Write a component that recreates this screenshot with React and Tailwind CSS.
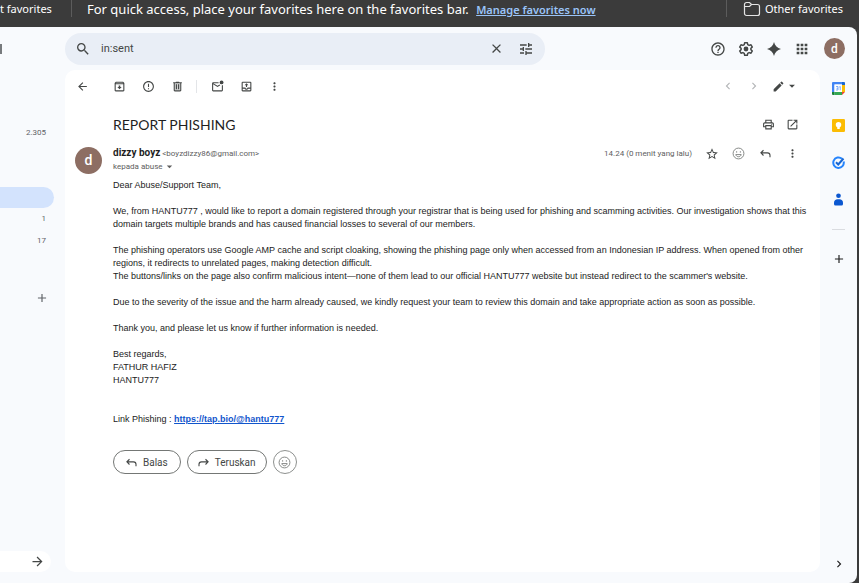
import React from 'react';
import {
  MdAdd,
  MdApps,
  MdArrowBack,
  MdArrowDropDown,
  MdArrowForward,
  MdChevronLeft,
  MdChevronRight,
  MdClose,
  MdEdit,
  MdErrorOutline,
  MdHelpOutline,
  MdMoreVert,
  MdOpenInNew,
  MdOutlineArchive,
  MdOutlinePrint,
  MdSearch,
  MdStarBorder,
  MdTune,
} from 'react-icons/md';

const IconButton = ({ label, className = 'w-[29px] h-6', children }) => (
  <button
    type="button"
    aria-label={label}
    className={`flex shrink-0 items-center justify-center ${className}`}
  >
    {children}
  </button>
);

const TrashIcon = () => (
  <svg width="13" height="13" viewBox="0 0 24 24" fill="currentColor">
    <path d="M15 4V3H9v1H4v2h1v13c0 1.1.9 2 2 2h10c1.1 0 2-.9 2-2V6h1V4h-5zm2 15H7V6h10v13z" />
    <path d="M9 8h2v9H9zM13 8h2v9h-2z" />
    <path d="M7 6h10v13H7z" opacity="0.25" />
  </svg>
);

const UnreadIcon = () => (
  <svg width="13" height="13" viewBox="0 0 24 24" fill="currentColor">
    <path d="M20 10v9H4V8l8 5 5.300-3.300A5 5 0 0 1 15.700 8.300L12 10.700 4 6h10.100A5 5 0 0 1 14.100 4H4a2 2 0 0 0-2 2v13c0 1.100.9 2 2 2h16a2 2 0 0 0 2-2V9a5 5 0 0 1-2 1z" />
    <circle cx="19.500" cy="4.500" r="3.500" />
  </svg>
);

const MoveIcon = () => (
  <svg width="13" height="13" viewBox="0 0 24 24" fill="currentColor">
    <path d="M19 3H5a2 2 0 0 0-2 2v14c0 1.100.9 2 2 2h14a2 2 0 0 0 2-2V5a2 2 0 0 0-2-2zm0 16H5v-3h3.600c.7 1.200 2 2 3.400 2s2.700-.8 3.500-2H19v3zm0-5h-5a2 2 0 0 1-4 0H5V5h14v9z" />
    <path d="M11 13h2V9.500h2.500L12 6 8.500 9.500H11z" />
  </svg>
);

const SmileIcon = () => (
  <svg width="13" height="13" viewBox="0 0 24 24" fill="none" stroke="currentColor" strokeWidth="1.6">
    <circle cx="12" cy="12" r="10" />
    <path d="M7 14h10c-.6 2.400-2.600 4-5 4s-4.400-1.600-5-4z" />
    <circle cx="8.500" cy="9" r="1.200" fill="currentColor" stroke="none" />
    <circle cx="15.500" cy="9" r="1.200" fill="currentColor" stroke="none" />
  </svg>
);

const ReplyIcon = ({ className = '' }) => (
  <svg width="11" height="11" viewBox="0 0 22 22" fill="none" stroke="currentColor" strokeWidth="2.200" className={className}>
    <path d="M7 4.500 1.800 9.700 7 15M2.200 9.700H15a5 5 0 0 1 5 5v4" />
  </svg>
);

const SparkIcon = () => (
  <svg width="16" height="16" viewBox="0 0 24 24" fill="currentColor">
    <path d="M12 1.500c1.300 5.600 4.900 9.200 10.500 10.500-5.600 1.300-9.200 4.900-10.500 10.500C10.700 16.900 7.100 13.300 1.500 12 7.100 10.700 10.700 7.100 12 1.500z" />
  </svg>
);

const SettingsIcon = () => (
  <svg width="16" height="16" viewBox="0 0 24 24" fill="none" stroke="currentColor" strokeWidth="2.200" strokeLinejoin="round">
    <path d="M10 2.500h4l.6 2.900 2.100 1.200 2.800-.9 2 3.400-2.200 2v1.800l2.200 2-2 3.400-2.800-.9-2.100 1.200-.6 2.900h-4l-.6-2.900-2.100-1.200-2.800.9-2-3.400 2.200-2v-1.800l-2.200-2 2-3.400 2.800.9 2.100-1.200z" />
    <circle cx="12" cy="12" r="3.600" fill="currentColor" stroke="none" />
  </svg>
);

const FolderIcon = () => (
  <svg width="18" height="16" viewBox="0 0 18 16" fill="none" stroke="#e4e4e4" strokeWidth="1.200">
    <path d="M1.500 3.500a2 2 0 0 1 2-2h3l2 2h6a2 2 0 0 1 2 2v7a2 2 0 0 1-2 2h-11a2 2 0 0 1-2-2z" />
    <path d="M1.500 5.500h5l2-2" />
  </svg>
);

const CalendarIcon = () => (
  <svg width="13" height="13" viewBox="0 0 26 26">
    <path d="M2 0h18v5H5v15H0V2a2 2 0 0 1 2-2z" fill="#4285f4" />
    <path d="M20 0h4a2 2 0 0 1 2 2v4h-6z" fill="#1967d2" />
    <path d="M20 6h6v14h-6z" fill="#fbbc04" />
    <path d="M5 20h15v6H5z" fill="#34a853" />
    <path d="M0 20h5v6H2a2 2 0 0 1-2-2z" fill="#188038" />
    <path d="M20 20h6l-6 6z" fill="#ea4335" />
    <path d="M5 5h15v15H5z" fill="#fff" />
    <path d="M8 9h4v7H8M9 12.500h3M14.500 10l2-1v7.500" fill="none" stroke="#4285f4" strokeWidth="1.300" />
  </svg>
);

const KeepIcon = () => (
  <svg width="13" height="13" viewBox="0 0 26 26">
    <rect width="26" height="26" rx="2.500" fill="#fbbc04" />
    <circle cx="13" cy="11.500" r="5.500" fill="#fff" />
    <path d="M10.500 15h5v5h-5z" fill="#fff" />
  </svg>
);

const TasksIcon = () => (
  <svg width="13" height="13" viewBox="0 0 26 26" fill="none">
    <path d="M20 5.500A10.500 10.500 0 1 0 23.300 11" stroke="#2684fc" strokeWidth="4" />
    <path d="m8 12.500 4.500 4.500L23 5" stroke="#1967d2" strokeWidth="4" />
  </svg>
);

const ContactsIcon = () => (
  <svg width="13" height="13" viewBox="0 0 26 26">
    <circle cx="13" cy="5.500" r="4.700" fill="#0b57d0" />
    <path d="M4 19c0-4 3-6.500 7-6.500h4c4 0 7 2.500 7 6.500v3a3 3 0 0 1-3 3H7a3 3 0 0 1-3-3z" fill="#0b57d0" />
  </svg>
);

const FavoritesBar = () => (
  <div className="flex h-[27px] shrink-0 items-start bg-[#3b3b3b] font-['Noto_Sans','Open_Sans',sans-serif] leading-[18px] text-white">
    <span className="w-[71px] shrink-0 whitespace-nowrap text-[11px]">t favorites</span>
    <span className="h-[17px] w-px shrink-0 bg-[#5c5c5c]" />
    <p className="ml-[15px] whitespace-nowrap text-[13px]">
      For quick access, place your favorites here on the favorites bar.{' '}
      <a href="#favorites" className="ml-1 text-[11px] font-semibold text-[#9ac4f8] underline">
        Manage favorites now
      </a>
    </p>
    <span className="ml-auto h-[17px] w-px shrink-0 bg-[#5c5c5c]" />
    <button type="button" className="mr-4 ml-4 flex items-center gap-1 whitespace-nowrap text-[11px]">
      <FolderIcon />
      Other favorites
    </button>
  </div>
);

const Header = () => (
  <header className="flex h-[43px] shrink-0 items-center pr-3 text-[#444746]">
    <div className="flex w-[65px] shrink-0">
      <span className="h-[10px] w-[2px] bg-[#777a7d]" />
    </div>
    <form className="flex h-8 w-[480px] items-center rounded-full bg-[#e9eef6] pr-[5px] pl-[3px]">
      <IconButton label="Search">
        <MdSearch size={16} />
      </IconButton>
      <input
        type="text"
        aria-label="Search mail"
        defaultValue="in:sent"
        className="ml-1 h-6 min-w-0 flex-1 bg-transparent text-[11px] text-[#444746] outline-none"
      />
      <IconButton label="Clear search">
        <MdClose size={15} />
      </IconButton>
      <IconButton label="Search options">
        <MdTune size={16} />
      </IconButton>
    </form>
    <div className="ml-auto flex items-center">
      <IconButton label="Help" className="h-6 w-7"><MdHelpOutline size={16} /></IconButton>
      <IconButton label="Settings" className="h-6 w-7"><SettingsIcon /></IconButton>
      <IconButton label="Gemini" className="h-6 w-7"><SparkIcon /></IconButton>
      <IconButton label="Apps" className="h-6 w-7"><MdApps size={16} /></IconButton>
      <button
        type="button"
        className="ml-2 size-[21px] rounded-full bg-[#8d6e63] text-center text-[12px] leading-[20px] font-medium text-white"
      >
        d
      </button>
    </div>
  </header>
);

const Sidebar = () => (
  <nav className="flex w-[65px] shrink-0 flex-col text-right text-[8px] leading-[22px] text-[#5f6368]">
    <span className="mt-[52px] pr-[19px]">2.305</span>
    <span className="mt-[43px] mr-[11px] h-[21px] rounded-r-full bg-[#d3e3fd]" />
    <span className="pr-[19px]">1</span>
    <span className="pr-[19px]">17</span>
    <div className="mt-[34px] flex justify-end pr-[9px]">
      <IconButton label="Create label"><MdAdd size={14} /></IconButton>
    </div>
    <button
      type="button"
      aria-label="Expand"
      className="mt-auto mr-[14px] flex h-[21px] items-center justify-end rounded-r-full bg-white pr-[6px] text-[#444746]"
    >
      <MdArrowForward size={15} />
    </button>
  </nav>
);

const Toolbar = () => (
  <div className="flex h-8 items-center pr-[21px] pl-[3px] text-[#444746]">
    <IconButton label="Back"><MdArrowBack size={13} /></IconButton>
    <div className="ml-2 flex">
      <IconButton label="Archive"><MdOutlineArchive size={13} /></IconButton>
      <IconButton label="Report spam"><MdErrorOutline size={13} /></IconButton>
      <IconButton label="Delete"><TrashIcon /></IconButton>
    </div>
    <span className="mr-[6px] ml-1 h-[13px] w-px bg-[#e3e5e8]" />
    <IconButton label="Mark as unread"><UnreadIcon /></IconButton>
    <IconButton label="Move to"><MoveIcon /></IconButton>
    <IconButton label="More" className="h-6 w-[26px]"><MdMoreVert size={13} /></IconButton>
    <div className="ml-auto flex text-[#b4b6b8]">
      <IconButton label="Newer" className="h-6 w-[26px]"><MdChevronLeft size={14} /></IconButton>
      <IconButton label="Older" className="h-6 w-[26px]"><MdChevronRight size={14} /></IconButton>
    </div>
    <IconButton label="Input tools" className="ml-[5px] h-6">
      <MdEdit size={13} />
      <MdArrowDropDown size={14} />
    </IconButton>
  </div>
);

const MessageBody = () => (
  <div className="space-y-[13px] pr-2 pl-12 font-['Liberation_Sans',Arial,sans-serif] text-[9px] leading-[13px] text-[#222]">
    <p>Dear Abuse/Support Team,</p>
    <p>
      We, from HANTU777 , would like to report a domain registered through your registrar that is being used for
      phishing and scamming activities. Our investigation shows that this domain targets multiple brands and has caused
      financial losses to several of our members.
    </p>
    <p>
      The phishing operators use Google AMP cache and script cloaking, showing the phishing page only when accessed from
      an Indonesian IP address. When opened from other regions, it redirects to unrelated pages, making detection
      difficult.
      <br />
      The buttons/links on the page also confirm malicious intent—none of them lead to our official HANTU777 website but
      instead redirect to the scammer's website.
    </p>
    <p>
      Due to the severity of the issue and the harm already caused, we kindly request your team to review this domain
      and take appropriate action as soon as possible.
    </p>
    <p>Thank you, and please let us know if further information is needed.</p>
    <p>
      Best regards,
      <br />
      FATHUR HAFIZ
      <br />
      HANTU777
    </p>
    <p className="pt-[13px]">
      Link Phishing :{' '}
      <a href="https://tap.bio/@hantu777" className="font-bold text-[#1155cc] underline">
        https://tap.bio/@hantu777
      </a>
    </p>
  </div>
);

const Message = () => (
  <main className="min-w-0 flex-1 rounded-[10px] bg-white">
    <Toolbar />
    <div className="mt-2 flex h-7 items-center pr-4 pl-12 text-[#444746]">
      <h1 className="flex-1 font-[Lato,sans-serif] text-[14px] text-[#1f1f1f]">REPORT PHISHING</h1>
      <IconButton label="Print" className="h-6 w-6"><MdOutlinePrint size={13} /></IconButton>
      <IconButton label="Open in new window" className="h-6 w-6"><MdOpenInNew size={13} /></IconButton>
    </div>
    <div className="mt-2 flex h-[33px] items-start pr-[14px] pl-[10px]">
      <span className="mt-px mr-[11px] size-[27px] shrink-0 rounded-full bg-[#8d6e63] text-center text-[14px] leading-[26px] font-medium text-white">
        d
      </span>
      <div className="min-w-0 flex-1 text-[8px] leading-[13px] text-[#5e5e5e]">
        <div>
          <span className="text-[10px] font-bold text-[#1f1f1f]">dizzy boyz</span>{' '}
          &lt;boyzdizzy86@gmail.com&gt;
        </div>
        <button type="button" className="flex items-center">
          kepada abuse
          <MdArrowDropDown size={13} />
        </button>
      </div>
      <div className="flex h-[15px] items-center text-[#444746]">
        <span className="mr-[6px] text-[8px] text-[#5e5e5e]">14.24 (0 menit yang lalu)</span>
        <IconButton label="Star" className="h-6 w-[27px]"><MdStarBorder size={14} /></IconButton>
        <IconButton label="Add reaction" className="h-6 w-[27px] text-[#747775]"><SmileIcon /></IconButton>
        <IconButton label="Reply" className="h-6 w-[27px]"><ReplyIcon /></IconButton>
        <IconButton label="More" className="h-6 w-[27px]"><MdMoreVert size={13} /></IconButton>
      </div>
    </div>
    <MessageBody />
    <div className="mt-6 mb-6 flex gap-[6px] pl-12 text-[10px] text-[#444746]">
      <button type="button" className="flex h-6 items-center gap-[6px] rounded-full border border-[#747775] px-3">
        <ReplyIcon />
        Balas
      </button>
      <button type="button" className="flex h-6 items-center gap-[6px] rounded-full border border-[#747775] px-[10px]">
        <ReplyIcon className="-scale-x-100" />
        Teruskan
      </button>
      <IconButton label="Add reaction" className="size-6 rounded-full border border-[#8e918f] text-[#747775]">
        <SmileIcon />
      </IconButton>
    </div>
  </main>
);

const SidePanel = () => (
  <aside className="flex w-[37px] shrink-0 flex-col items-center pt-[6px] text-[#1f1f1f]">
    <div className="flex flex-col gap-[13px]">
      <IconButton label="Calendar"><CalendarIcon /></IconButton>
      <IconButton label="Keep"><KeepIcon /></IconButton>
      <IconButton label="Tasks"><TasksIcon /></IconButton>
      <IconButton label="Contacts"><ContactsIcon /></IconButton>
    </div>
    <span className="mt-[18px] h-px w-[13px] bg-[#dadce0]" />
    <IconButton label="Get add-ons" className="mt-[17px] h-6 w-6"><MdAdd size={14} /></IconButton>
    <IconButton label="Hide side panel" className="mt-auto h-4 w-6"><MdChevronRight size={14} /></IconButton>
  </aside>
);

export default function App() {
  return (
    <div className="flex min-h-screen flex-col bg-[#3b3b3b] font-[Roboto,sans-serif]">
      <FavoritesBar />
      <div className="mr-[2px] flex flex-1 flex-col rounded-r-lg bg-[#f8fafd] pb-[11px]">
        <Header />
        <div className="flex flex-1">
          <Sidebar />
          <Message />
          <SidePanel />
        </div>
      </div>
    </div>
  );
}
